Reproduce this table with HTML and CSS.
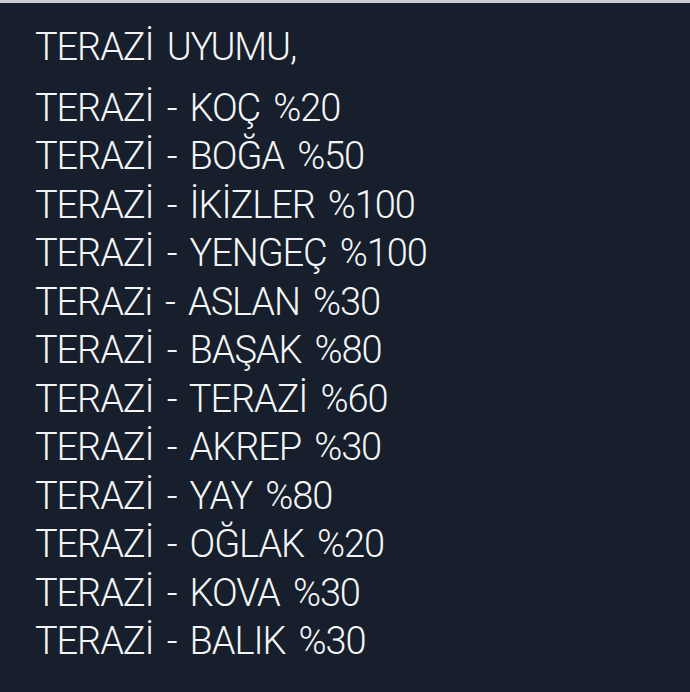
FILE: index.html
```html
<!DOCTYPE html>
<html lang="tr">
<head>
<meta charset="utf-8">
<link rel="stylesheet" href="styles.css">
</head>
<body>
<main class="card">
  <p class="title">TERAZİ UYUMU,</p>
  <ul class="list">
    <li>TERAZİ - KOÇ %20</li>
    <li>TERAZİ - BOĞA %50</li>
    <li>TERAZİ - İKİZLER %100</li>
    <li>TERAZİ - YENGEÇ %100</li>
    <li>TERAZi - ASLAN %30</li>
    <li>TERAZİ - BAŞAK %80</li>
    <li>TERAZİ - TERAZİ %60</li>
    <li>TERAZİ - AKREP %30</li>
    <li>TERAZİ - YAY %80</li>
    <li>TERAZİ - OĞLAK %20</li>
    <li>TERAZİ - KOVA %30</li>
    <li>TERAZİ - BALIK %30</li>
  </ul>
</main>
</body>
</html>
```
FILE: styles.css
```css
html, body {
  margin: 0;
  padding: 0;
  background: #161f2b;
}
.card {
  box-sizing: border-box;
  width: 690px;
  height: 692px;
  border-top: 3px solid #c9cdd1;
  background: #161f2b;
  color: #f4f5f6;
  font-family: "Roboto", "Liberation Sans", sans-serif;
  font-weight: 300;
  font-size: 38px;
  letter-spacing: -1.1px;
  word-spacing: 5px;
  padding: 20px 0 0 35px;
  overflow: hidden;
}
.title {
  margin: 0 0 12px 0;
  line-height: 48.5px;
}
.list {
  list-style: none;
  margin: 0;
  padding: 0;
}
.list li {
  line-height: 48.5px;
}
```
